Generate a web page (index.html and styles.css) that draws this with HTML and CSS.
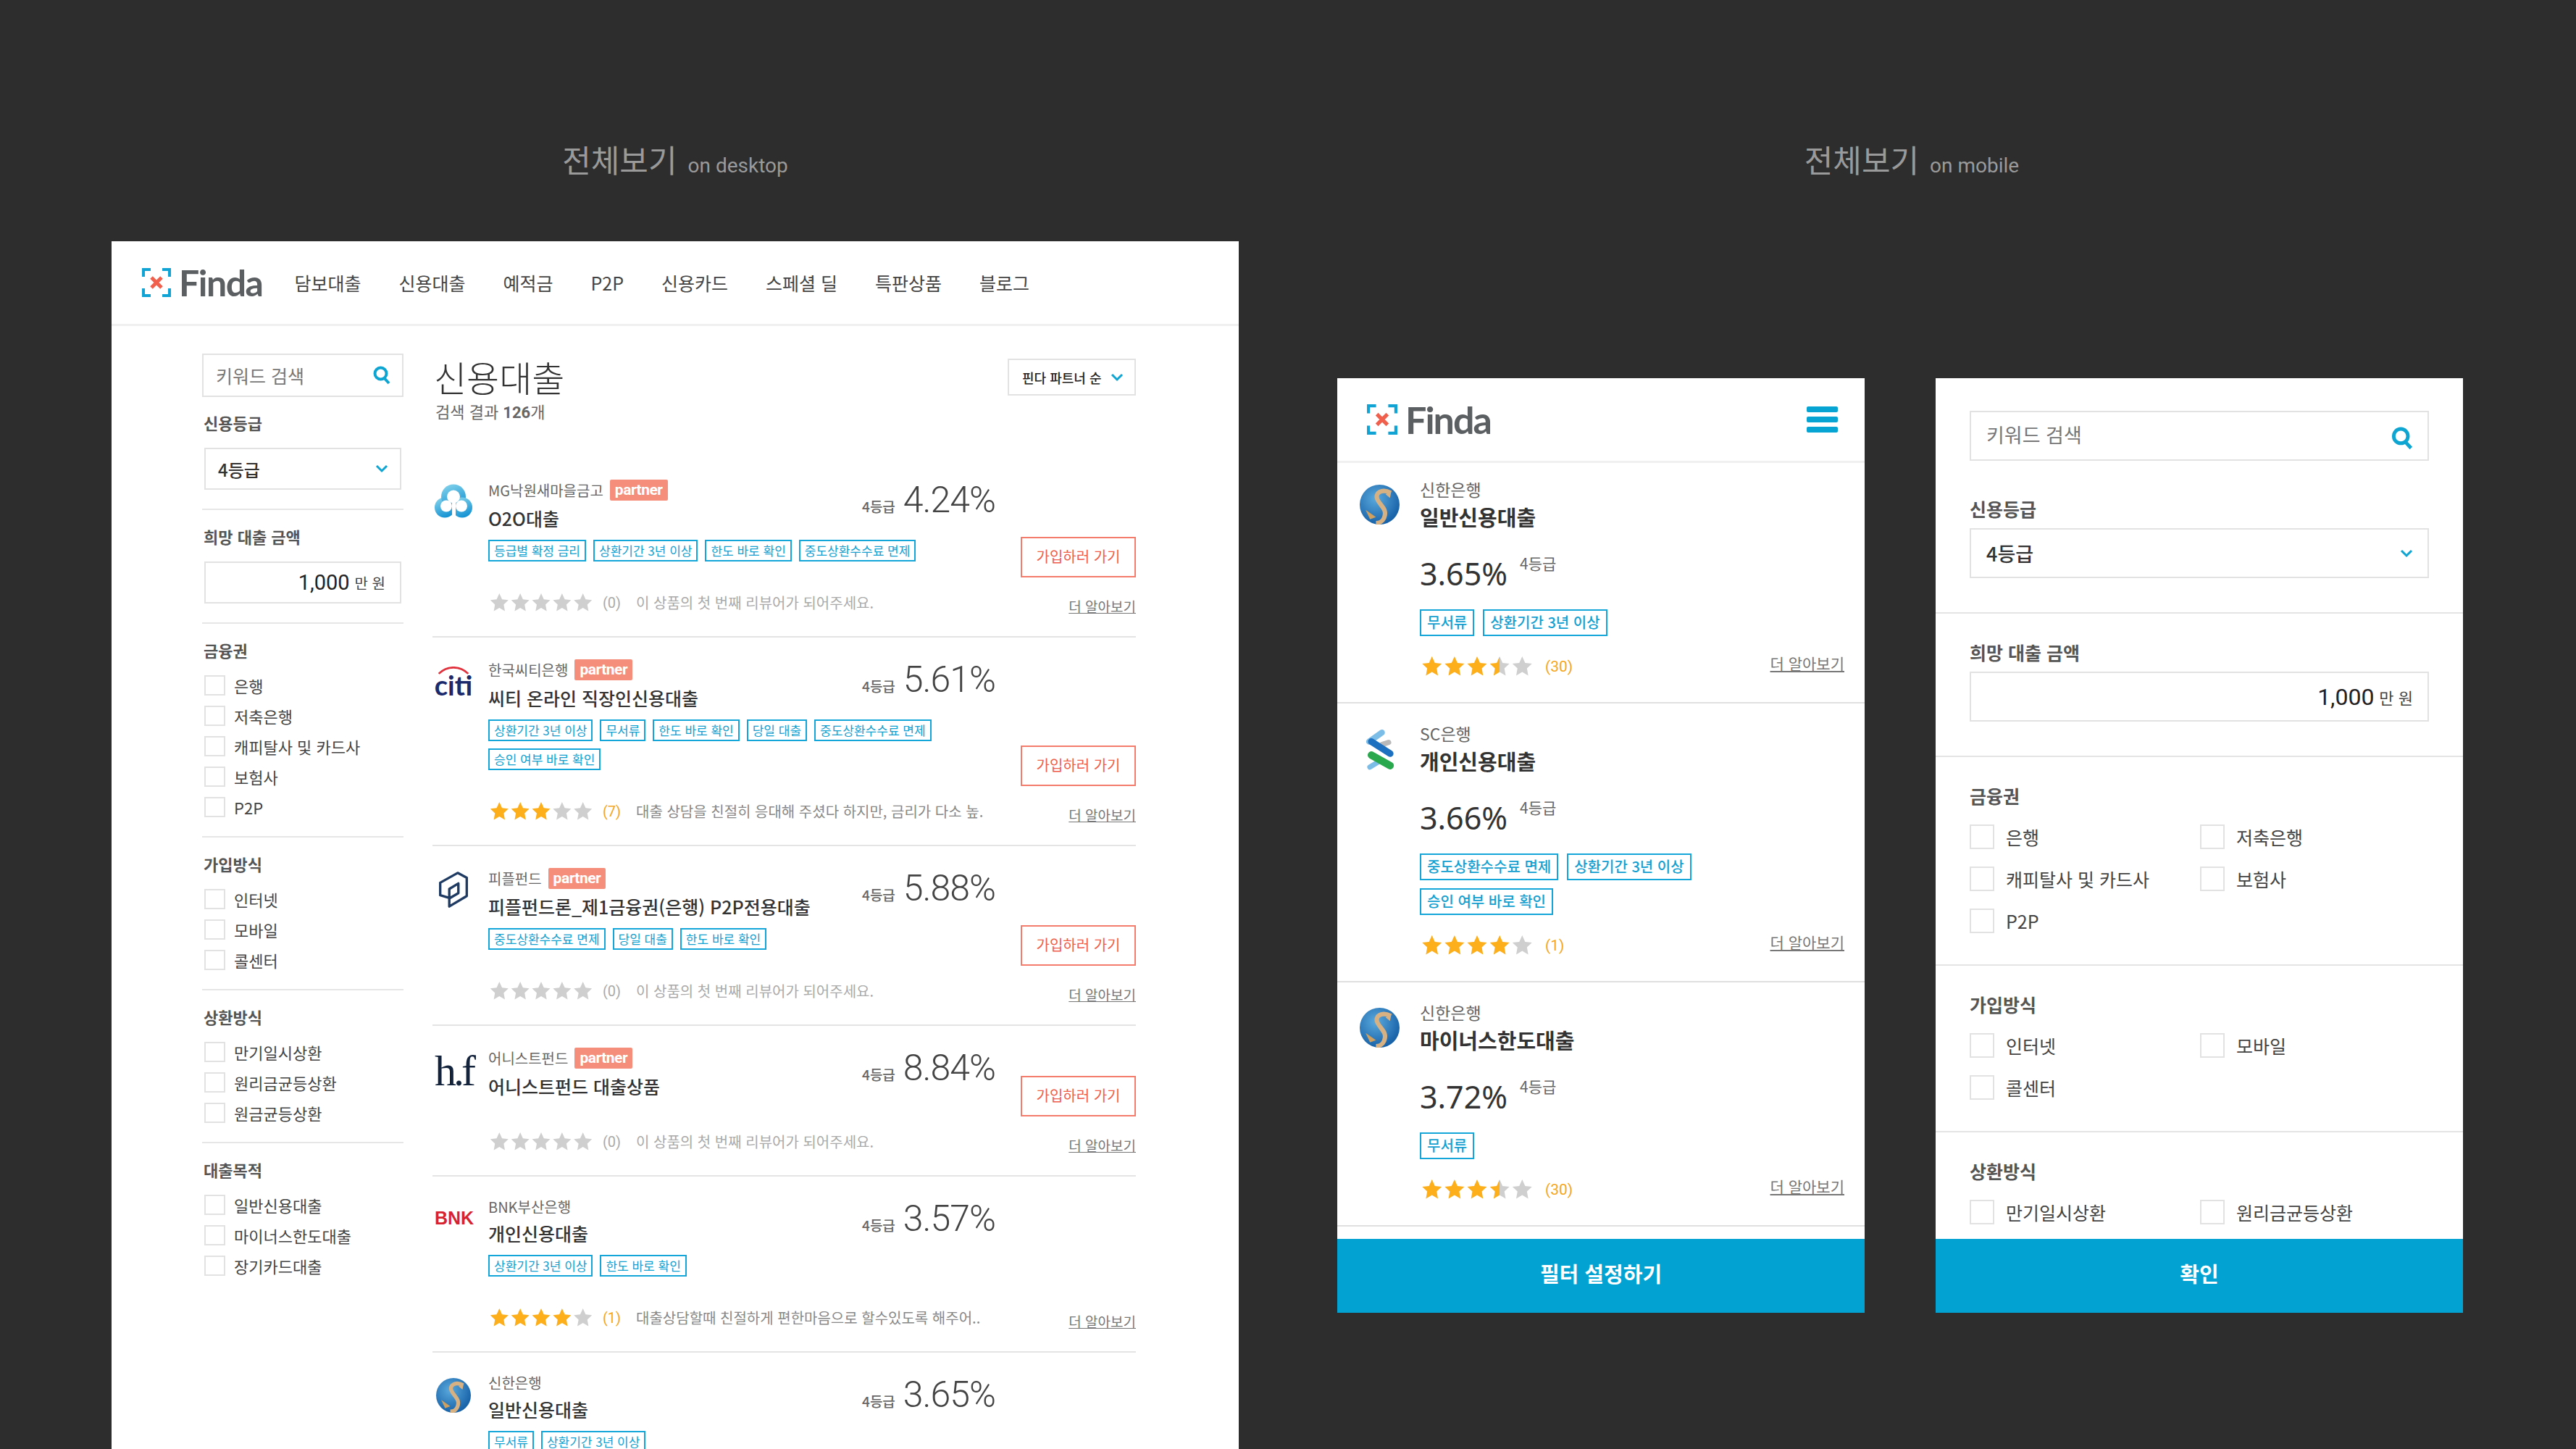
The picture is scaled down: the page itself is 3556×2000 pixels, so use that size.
FILE: index.html
```html
<!DOCTYPE html>
<html lang="ko">
<head>
    <meta charset="UTF-8">
    <title>Finda 전체보기</title>
    <link rel="stylesheet" href="styles.css">
</head>
<body>
    <!-- Shared icons -->
    <svg class="defs" width="0" height="0" aria-hidden="true">
        <defs>
            <linearGradient id="half-fill"><stop offset="50%" stop-color="#fdae1b"/><stop offset="50%" stop-color="#cfcfcf"/></linearGradient>
            <radialGradient id="globe" cx="40%" cy="35%" r="75%"><stop offset="0" stop-color="#5aa9dd"/><stop offset="1" stop-color="#0d57a0"/></radialGradient>
            <linearGradient id="cloud" x1="0.3" y1="0" x2="0.7" y2="1"><stop offset="0" stop-color="#7fd0ea"/><stop offset="1" stop-color="#0f8fd2"/></linearGradient>
            <polygon id="star" points="13,0 16.9,8.6 26,9.7 19.3,16 21,25.5 13,20.8 5,25.5 6.700,16 0,9.700 9.100,8.600"/>
        </defs>
        <symbol id="stars-0" viewBox="0 0 146 26"><g fill="#cfcfcf"><use href="#star"/><use href="#star" x="30"/><use href="#star" x="60"/><use href="#star" x="90"/><use href="#star" x="120"/></g></symbol>
        <symbol id="stars-3" viewBox="0 0 146 26"><g fill="#fdae1b"><use href="#star"/><use href="#star" x="30"/><use href="#star" x="60"/></g><g fill="#cfcfcf"><use href="#star" x="90"/><use href="#star" x="120"/></g></symbol>
        <symbol id="stars-4" viewBox="0 0 146 26"><g fill="#fdae1b"><use href="#star"/><use href="#star" x="30"/><use href="#star" x="60"/><use href="#star" x="90"/></g><use href="#star" x="120" fill="#cfcfcf"/></symbol>
        <symbol id="stars-3h" viewBox="0 0 146 26"><g fill="#fdae1b"><use href="#star"/><use href="#star" x="30"/><use href="#star" x="60"/></g><use href="#star" x="90" fill="url(#half-fill)"/><use href="#star" x="120" fill="#cfcfcf"/></symbol>
        <symbol id="finda-mark" viewBox="0 0 40 40">
            <path d="M2 12V2H12M28 2H38V12M2 28V38H12M28 38H38V28" fill="none" stroke="#11a3d4" stroke-width="4"/>
            <path d="M13 13L27 27M27 13L13 27" fill="none" stroke="#f0604d" stroke-width="5"/>
        </symbol>
        <symbol id="logo-shinhan" viewBox="0 0 54 54">
            <circle cx="27" cy="27" r="27" fill="url(#globe)"/>
            <path d="M42 11C30 5 20 11 24 20C28 29 38 33 33 45C31 50 26 52 22 52" fill="none" stroke="#d8b183" stroke-width="6"/>
            <path d="M35 13L43 8L41 18Z" fill="#d8b183"/>
            <path d="M8 34L22 44L14 47Z" fill="#cfa05f"/>
        </symbol>
        <symbol id="logo-mg" viewBox="9 14 52 47">
            <g fill="url(#cloud)"><circle cx="23" cy="46" r="14"/><circle cx="35" cy="31" r="17"/><circle cx="47" cy="46" r="14"/></g>
            <g fill="#fff"><circle cx="35" cy="31" r="9"/><circle cx="25" cy="44" r="8"/><circle cx="46" cy="44" r="8"/><rect x="33" y="34" width="5" height="28"/></g>
        </symbol>
        <symbol id="logo-people" viewBox="14 10 44 56">
            <path d="M17 28L42 14L55 21V47L30 62V37L43 29V43L31 50L17 46Z" fill="none" stroke="#1f3b63" stroke-width="3.500" stroke-linejoin="round"/>
        </symbol>
        <symbol id="logo-sc" viewBox="14 4 42 58">
            <path d="M38 9L21 21" fill="none" stroke="#7cbde8" stroke-width="8" stroke-linecap="round"/>
            <path d="M47 22L38 25" fill="none" stroke="#b9b9b9" stroke-width="7" stroke-linecap="round"/>
            <path d="M24 21L49 37" fill="none" stroke="#1d6fc0" stroke-width="9" stroke-linecap="round"/>
            <path d="M35 47L22 55" fill="none" stroke="#7cbde8" stroke-width="7" stroke-linecap="round"/>
            <path d="M24 39L49 53" fill="none" stroke="#2aa84e" stroke-width="10" stroke-linecap="round"/>
        </symbol>
        <symbol id="icon-search" viewBox="0 0 24 26">
            <circle cx="10.500" cy="10.500" r="8" fill="none" stroke="#0ea5d2" stroke-width="4"/>
            <path d="M15.500 17L22 24" fill="none" stroke="#0ea5d2" stroke-width="4"/>
        </symbol>
        <symbol id="icon-chevron" viewBox="0 0 18 12">
            <path d="M2 2L9 9L16 2" fill="none" stroke="#0ea5d2" stroke-width="3"/>
        </symbol>
    </svg>

    <div class="page">
        <!-- Desktop preview -->
        <section class="col-desktop">
            <h2 class="col-title">전체보기 <small>on desktop</small></h2>
            <div class="desktop">
                <header class="site-header">
                    <a class="brand">
                        <svg class="brand-mark"><use href="#finda-mark"/></svg>
                        <span class="brand-name">Finda</span>
                    </a>
                    <nav class="site-nav">
                        <a>담보대출</a><a>신용대출</a><a>예적금</a><a>P2P</a><a>신용카드</a><a>스페셜 딜</a><a>특판상품</a><a>블로그</a>
                    </nav>
                </header>
                <div class="desktop-body">
                    <aside class="sidebar">
                        <div class="field search-field"><span class="placeholder">키워드 검색</span><svg class="icon-search"><use href="#icon-search"/></svg></div>
                        <div class="side-group">
                            <div class="side-label">신용등급</div>
                            <div class="field inset"><span class="value-bold">4등급</span><svg class="icon-chevron"><use href="#icon-chevron"/></svg></div>
                        </div>
                        <div class="side-group">
                            <div class="side-label">희망 대출 금액</div>
                            <div class="field inset amount"><span class="amount-num">1,000</span><span class="amount-unit">만 원</span></div>
                        </div>
                        <div class="side-group">
                            <div class="side-label">금융권</div>
                            <label class="check"><i></i>은행</label>
                            <label class="check"><i></i>저축은행</label>
                            <label class="check"><i></i>캐피탈사 및 카드사</label>
                            <label class="check"><i></i>보험사</label>
                            <label class="check"><i></i>P2P</label>
                        </div>
                        <div class="side-group">
                            <div class="side-label">가입방식</div>
                            <label class="check"><i></i>인터넷</label>
                            <label class="check"><i></i>모바일</label>
                            <label class="check"><i></i>콜센터</label>
                        </div>
                        <div class="side-group">
                            <div class="side-label">상환방식</div>
                            <label class="check"><i></i>만기일시상환</label>
                            <label class="check"><i></i>원리금균등상환</label>
                            <label class="check"><i></i>원금균등상환</label>
                        </div>
                        <div class="side-group">
                            <div class="side-label">대출목적</div>
                            <label class="check"><i></i>일반신용대출</label>
                            <label class="check"><i></i>마이너스한도대출</label>
                            <label class="check"><i></i>장기카드대출</label>
                        </div>
                    </aside>

                    <main class="results">
                        <div class="results-head">
                            <div>
                                <h1 class="results-title">신용대출</h1>
                                <p class="results-count">검색 결과 <b>126</b>개</p>
                            </div>
                            <div class="sort">핀다 파트너 순<svg class="icon-chevron"><use href="#icon-chevron"/></svg></div>
                        </div>

                        <article class="loan">
                            <svg class="loan-logo logo-mg"><use href="#logo-mg"/></svg>
                            <div class="loan-main">
                                <div class="loan-top">
                                    <div class="loan-info">
                                        <div class="provider">MG낙원새마을금고<span class="partner">partner</span></div>
                                        <div class="product">O2O대출</div>
                                        <div class="tags"><span>등급별 확정 금리</span><span>상환기간 3년 이상</span><span>한도 바로 확인</span><span>중도상환수수료 면제</span></div>
                                    </div>
                                    <div class="loan-side">
                                        <div class="rate"><span>4등급</span><b>4.24%</b></div>
                                        <a class="join">가입하러 가기</a>
                                    </div>
                                </div>
                                <div class="review">
                                    <svg class="stars"><use href="#stars-0"/></svg><span class="count">(0)</span><span class="quote">이 상품의 첫 번째 리뷰어가 되어주세요.</span><a class="more">더 알아보기</a>
                                </div>
                            </div>
                        </article>

                        <article class="loan">
                            <div class="loan-logo logo-citi"><svg viewBox="0 0 52 12"><path d="M3 11C16 -2 36 -2 49 11" fill="none" stroke="#e0313c" stroke-width="3"/></svg><span>citi</span></div>
                            <div class="loan-main">
                                <div class="loan-top">
                                    <div class="loan-info">
                                        <div class="provider">한국씨티은행<span class="partner">partner</span></div>
                                        <div class="product">씨티 온라인 직장인신용대출</div>
                                        <div class="tags"><span>상환기간 3년 이상</span><span>무서류</span><span>한도 바로 확인</span><span>당일 대출</span><span>중도상환수수료 면제</span><span>승인 여부 바로 확인</span></div>
                                    </div>
                                    <div class="loan-side">
                                        <div class="rate"><span>4등급</span><b>5.61%</b></div>
                                        <a class="join">가입하러 가기</a>
                                    </div>
                                </div>
                                <div class="review">
                                    <svg class="stars"><use href="#stars-3"/></svg><span class="count on">(7)</span><span class="quote dark">대출 상담을 친절히 응대해 주셨다 하지만, 금리가 다소 높.</span><a class="more">더 알아보기</a>
                                </div>
                            </div>
                        </article>

                        <article class="loan">
                            <svg class="loan-logo logo-people"><use href="#logo-people"/></svg>
                            <div class="loan-main">
                                <div class="loan-top">
                                    <div class="loan-info">
                                        <div class="provider">피플펀드<span class="partner">partner</span></div>
                                        <div class="product">피플펀드론_제1금융권(은행) P2P전용대출</div>
                                        <div class="tags"><span>중도상환수수료 면제</span><span>당일 대출</span><span>한도 바로 확인</span></div>
                                    </div>
                                    <div class="loan-side">
                                        <div class="rate"><span>4등급</span><b>5.88%</b></div>
                                        <a class="join">가입하러 가기</a>
                                    </div>
                                </div>
                                <div class="review">
                                    <svg class="stars"><use href="#stars-0"/></svg><span class="count">(0)</span><span class="quote">이 상품의 첫 번째 리뷰어가 되어주세요.</span><a class="more">더 알아보기</a>
                                </div>
                            </div>
                        </article>

                        <article class="loan">
                            <div class="loan-logo logo-hf">h.f</div>
                            <div class="loan-main">
                                <div class="loan-top">
                                    <div class="loan-info">
                                        <div class="provider">어니스트펀드<span class="partner">partner</span></div>
                                        <div class="product">어니스트펀드 대출상품</div>
                                    </div>
                                    <div class="loan-side">
                                        <div class="rate"><span>4등급</span><b>8.84%</b></div>
                                        <a class="join">가입하러 가기</a>
                                    </div>
                                </div>
                                <div class="review">
                                    <svg class="stars"><use href="#stars-0"/></svg><span class="count">(0)</span><span class="quote">이 상품의 첫 번째 리뷰어가 되어주세요.</span><a class="more">더 알아보기</a>
                                </div>
                            </div>
                        </article>

                        <article class="loan">
                            <div class="loan-logo logo-bnk">BNK</div>
                            <div class="loan-main">
                                <div class="loan-top">
                                    <div class="loan-info">
                                        <div class="provider">BNK부산은행</div>
                                        <div class="product">개인신용대출</div>
                                        <div class="tags"><span>상환기간 3년 이상</span><span>한도 바로 확인</span></div>
                                    </div>
                                    <div class="loan-side">
                                        <div class="rate"><span>4등급</span><b>3.57%</b></div>
                                    </div>
                                </div>
                                <div class="review">
                                    <svg class="stars"><use href="#stars-4"/></svg><span class="count on">(1)</span><span class="quote dark">대출상담할때 친절하게 편한마음으로 할수있도록 해주어..</span><a class="more">더 알아보기</a>
                                </div>
                            </div>
                        </article>

                        <article class="loan">
                            <svg class="loan-logo logo-shinhan"><use href="#logo-shinhan"/></svg>
                            <div class="loan-main">
                                <div class="loan-top">
                                    <div class="loan-info">
                                        <div class="provider">신한은행</div>
                                        <div class="product">일반신용대출</div>
                                        <div class="tags"><span>무서류</span><span>상환기간 3년 이상</span></div>
                                    </div>
                                    <div class="loan-side">
                                        <div class="rate"><span>4등급</span><b>3.65%</b></div>
                                    </div>
                                </div>
                            </div>
                        </article>
                    </main>
                </div>
            </div>
        </section>

        <!-- Mobile previews -->
        <section class="col-mobile">
            <h2 class="col-title">전체보기 <small>on mobile</small></h2>
            <div class="phones">
                <div class="phone">
                    <header class="phone-header">
                        <a class="brand">
                            <svg class="brand-mark"><use href="#finda-mark"/></svg>
                            <span class="brand-name">Finda</span>
                        </a>
                        <div class="menu"><i></i><i></i><i></i></div>
                    </header>
                    <div class="phone-scroll">
                        <article class="card first">
                            <svg class="card-logo"><use href="#logo-shinhan"/></svg>
                            <div class="card-main">
                                <div class="card-provider">신한은행</div>
                                <div class="card-product">일반신용대출</div>
                                <div class="card-rate"><b>3.65%</b><span>4등급</span></div>
                                <div class="tags large"><span>무서류</span><span>상환기간 3년 이상</span></div>
                                <div class="card-review"><svg class="stars"><use href="#stars-3h"/></svg><span class="count on">(30)</span><a class="more">더 알아보기</a></div>
                            </div>
                        </article>
                        <article class="card">
                            <svg class="card-logo logo-sc"><use href="#logo-sc"/></svg>
                            <div class="card-main">
                                <div class="card-provider">SC은행</div>
                                <div class="card-product">개인신용대출</div>
                                <div class="card-rate"><b>3.66%</b><span>4등급</span></div>
                                <div class="tags large"><span>중도상환수수료 면제</span><span>상환기간 3년 이상</span><span>승인 여부 바로 확인</span></div>
                                <div class="card-review"><svg class="stars"><use href="#stars-4"/></svg><span class="count on">(1)</span><a class="more">더 알아보기</a></div>
                            </div>
                        </article>
                        <article class="card">
                            <svg class="card-logo"><use href="#logo-shinhan"/></svg>
                            <div class="card-main">
                                <div class="card-provider">신한은행</div>
                                <div class="card-product">마이너스한도대출</div>
                                <div class="card-rate"><b>3.72%</b><span>4등급</span></div>
                                <div class="tags large"><span>무서류</span></div>
                                <div class="card-review"><svg class="stars"><use href="#stars-3h"/></svg><span class="count on">(30)</span><a class="more">더 알아보기</a></div>
                            </div>
                        </article>
                    </div>
                    <a class="phone-cta">필터 설정하기</a>
                </div>

                <div class="phone">
                    <div class="phone-scroll">
                        <div class="m-group top">
                            <div class="field m-field"><span class="placeholder">키워드 검색</span><svg class="icon-search"><use href="#icon-search"/></svg></div>
                            <div class="m-label spaced">신용등급</div>
                            <div class="field m-field"><span class="value-bold">4등급</span><svg class="icon-chevron"><use href="#icon-chevron"/></svg></div>
                        </div>
                        <div class="m-group">
                            <div class="m-label">희망 대출 금액</div>
                            <div class="field m-field amount"><span class="amount-num">1,000</span><span class="amount-unit">만 원</span></div>
                        </div>
                        <div class="m-group">
                            <div class="m-label">금융권</div>
                            <div class="m-checks">
                                <label class="check"><i></i>은행</label>
                                <label class="check"><i></i>저축은행</label>
                                <label class="check"><i></i>캐피탈사 및 카드사</label>
                                <label class="check"><i></i>보험사</label>
                                <label class="check"><i></i>P2P</label>
                            </div>
                        </div>
                        <div class="m-group">
                            <div class="m-label">가입방식</div>
                            <div class="m-checks">
                                <label class="check"><i></i>인터넷</label>
                                <label class="check"><i></i>모바일</label>
                                <label class="check"><i></i>콜센터</label>
                            </div>
                        </div>
                        <div class="m-group">
                            <div class="m-label">상환방식</div>
                            <div class="m-checks">
                                <label class="check"><i></i>만기일시상환</label>
                                <label class="check"><i></i>원리금균등상환</label>
                            </div>
                        </div>
                    </div>
                    <a class="phone-cta">확인</a>
                </div>
            </div>
        </section>
    </div>
</body>
</html>
```

FILE: styles.css
```css
* {
    box-sizing: border-box;
}

body {
    margin: 0;
    height: 2000px;
    overflow: hidden;
    background-color: #2d2d2d;
    color: #333;
    font-family: "Noto Sans CJK KR", "Noto Sans", sans-serif;
}

.defs {
    position: absolute;
}

.page {
    display: flex;
    padding-top: 189px;
}

.col-title {
    margin: 0;
    height: 60px;
    line-height: 60px;
    text-align: center;
    color: #9a9a9a;
    font-size: 43px;
    font-weight: 400;
}

.col-title small {
    margin-left: 3px;
    font-family: Roboto, sans-serif;
    font-size: 28px;
}

/* Desktop column */
.col-desktop {
    width: 1556px;
    margin-left: 154px;
}

.desktop {
    height: 1667px;
    margin-top: 84px;
    background-color: #fff;
    overflow: hidden;
}

.site-header {
    display: flex;
    align-items: center;
    height: 117px;
    padding-left: 42px;
    border-bottom: 3px solid #f0f0f0;
}

.brand {
    display: flex;
    align-items: center;
}

.brand-mark {
    width: 40px;
    height: 40px;
}

.brand-name {
    margin-left: 11px;
    color: #5c5f62;
    font-family: Lato, sans-serif;
    font-size: 50px;
    font-weight: 700;
    line-height: 40px;
    letter-spacing: -1.500px;
}

.site-nav {
    display: flex;
    gap: 52px;
    margin-left: 44px;
    color: #444;
    font-size: 25px;
}

.desktop-body {
    display: flex;
    gap: 40px;
    padding: 38px 142px 0 125px;
}

/* Sidebar */
.sidebar {
    flex: none;
    width: 278px;
}

.field {
    display: flex;
    align-items: center;
    justify-content: space-between;
    height: 58px;
    padding: 0 16px 0 17px;
    border: 2px solid #e2e2e2;
}

.search-field {
    height: 60px;
    margin-bottom: 24px;
}

.inset {
    margin: 0 3px;
}

.placeholder {
    color: #777;
    font-size: 25px;
}

.icon-search {
    width: 24px;
    height: 26px;
}

.icon-chevron {
    flex: none;
    width: 18px;
    height: 12px;
}

.value-bold {
    color: #333;
    font-size: 24px;
    font-weight: 500;
}

.amount {
    justify-content: flex-end;
    gap: 7px;
    padding-right: 20px;
}

.amount-num {
    color: #222;
    font-family: Roboto, sans-serif;
    font-size: 29px;
}

.amount-unit {
    color: #444;
    font-size: 20px;
}

.side-group {
    padding-bottom: 26px;
}

.side-group + .side-group {
    padding-top: 25px;
    border-top: 2px solid #e6e6e6;
}

.side-label {
    height: 22px;
    margin-bottom: 24px;
    padding-left: 2px;
    color: #555;
    font-size: 22px;
    font-weight: 700;
    line-height: 22px;
}

.check {
    display: flex;
    align-items: center;
    height: 28px;
    margin-bottom: 14px;
    margin-left: 3px;
    color: #444;
    font-size: 22px;
}

.check:last-child {
    margin-bottom: 0;
}

.check i {
    flex: none;
    width: 29px;
    height: 28px;
    margin-right: 12px;
    border: 2px solid #e2e2e2;
}

/* Results */
.results {
    flex: 1;
    min-width: 0;
}

.results-head {
    display: flex;
    justify-content: space-between;
    align-items: flex-start;
    height: 144px;
    padding: 0 0 0 2px;
}

.results-title {
    margin: 0;
    color: #333;
    font-size: 49px;
    font-weight: 300;
    line-height: 64px;
}

.results-count {
    margin: 1px 0 0 2px;
    color: #666;
    font-size: 22px;
    line-height: 28px;
}

.results-count b {
    font-family: Roboto, sans-serif;
}

.sort {
    display: flex;
    align-items: center;
    justify-content: space-between;
    width: 177px;
    height: 51px;
    margin-top: 7px;
    padding: 0 15px 0 18px;
    border: 2px solid #e2e2e2;
    color: #222;
    font-size: 18px;
    font-weight: 500;
}

.loan {
    display: flex;
    padding: 30px 0 34px;
    border-bottom: 2px solid #e4e4e4;
}

.loan:last-child {
    border-bottom: none;
}

.loan-logo {
    flex: none;
    width: 52px;
    height: 48px;
    margin: 6px 22px 0 3px;
}

.logo-citi {
    display: flex;
    flex-direction: column;
    align-items: center;
    margin-top: 10px;
    color: #1a2a6c;
    font-family: Lato, sans-serif;
    font-size: 38px;
    font-weight: 700;
    line-height: 26px;
}

.logo-citi svg {
    width: 46px;
    height: 11px;
    margin-bottom: 1px;
}

.logo-hf {
    color: #14233c;
    font-family: "Liberation Serif", serif;
    font-size: 60px;
    line-height: 52px;
    letter-spacing: -4px;
}

.logo-bnk {
    margin-top: 14px;
    color: #d7232f;
    font-family: "Liberation Sans", sans-serif;
    font-size: 25px;
    font-weight: 700;
    line-height: 26px;
}

.logo-people {
    height: 54px;
    margin-top: 3px;
}

.logo-shinhan {
    margin-top: 5px;
}

.loan-main {
    flex: 1;
    min-width: 0;
}

.loan-top {
    display: flex;
    justify-content: space-between;
}

.loan-info {
    flex: none;
    width: 640px;
    padding-bottom: 22px;
}

.provider {
    display: flex;
    align-items: center;
    min-height: 24px;
    color: #666;
    font-size: 20px;
    line-height: 24px;
}

.partner {
    display: block;
    height: 29px;
    margin-left: 9px;
    padding: 0 7px;
    border-radius: 2px;
    background-color: #f58f7c;
    color: #fff;
    font-family: Roboto, sans-serif;
    font-size: 21px;
    font-weight: 700;
    line-height: 28px;
    letter-spacing: -0.500px;
}

.product {
    margin-top: 6px;
    color: #333;
    font-size: 25px;
    font-weight: 500;
    line-height: 36px;
}

.tags {
    display: flex;
    flex-wrap: wrap;
    gap: 10px;
    margin-top: 12px;
}

.tags span {
    height: 30px;
    padding: 0 6px;
    border: 2px solid #14a6d8;
    color: #14a0d0;
    font-size: 17px;
    line-height: 25px;
    white-space: nowrap;
}

.loan-side {
    display: flex;
    flex: none;
    flex-direction: column;
    justify-content: space-between;
    width: 254px;
}

.rate {
    display: flex;
    justify-content: flex-end;
    align-items: baseline;
    gap: 11px;
    height: 39px;
    padding-right: 194px;
    line-height: 56px;
    white-space: nowrap;
}

.rate span {
    color: #666;
    font-size: 19px;
    font-weight: 500;
}

.rate b {
    color: #444;
    font-family: Roboto, sans-serif;
    font-size: 50px;
    font-weight: 300;
    letter-spacing: -1px;
}

.join {
    align-self: flex-end;
    width: 159px;
    height: 56px;
    border: 2px solid #f47c6c;
    color: #ef5d4a;
    font-size: 20px;
    line-height: 50px;
    text-align: center;
}

.review {
    display: flex;
    align-items: center;
    height: 25px;
    margin-top: 22px;
}

.stars {
    flex: none;
    width: 146px;
    height: 25px;
}

.count {
    margin-left: 12px;
    color: #aaa;
    font-family: Roboto, sans-serif;
    font-size: 20px;
}

.count.on {
    color: #f5a623;
}

.quote {
    margin-left: 21px;
    color: #aaa;
    font-size: 20px;
}

.quote.dark {
    color: #888;
}

.more {
    margin-left: auto;
    color: #777;
    font-size: 19px;
    text-decoration: underline;
    white-space: nowrap;
}

.review .more {
    margin-top: 10px;
}

/* Mobile column */
.col-mobile {
    flex: 1;
    padding-left: 12px;
}

.phones {
    display: flex;
    gap: 98px;
    margin-top: 273px;
    margin-left: 124px;
}

.phone {
    display: flex;
    flex-direction: column;
    width: 728px;
    height: 1290px;
    background-color: #fff;
    overflow: hidden;
}

.phone-header {
    display: flex;
    flex: none;
    justify-content: space-between;
    align-items: center;
    height: 117px;
    padding: 0 37px 0 41px;
    border-bottom: 3px solid #f0f0f0;
}

.phone-header .brand-mark {
    width: 42px;
    height: 42px;
}

.phone-header .brand-name {
    font-size: 52px;
    letter-spacing: -2px;
}

.menu {
    display: flex;
    flex-direction: column;
    gap: 6px;
    width: 43px;
}

.menu i {
    height: 8px;
    border-radius: 2px;
    background-color: #06a4d3;
}

.phone-scroll {
    flex: 1;
    min-height: 0;
    overflow: hidden;
}

.phone-cta {
    flex: none;
    height: 102px;
    background-color: #02a3d3;
    color: #fff;
    font-size: 29px;
    font-weight: 700;
    line-height: 94px;
    text-align: center;
}

.card {
    display: flex;
    padding: 26px 28px 36px 31px;
    border-bottom: 2px solid #e0e0e0;
}

.card.first {
    padding-top: 21px;
}

.card-logo {
    flex: none;
    width: 55px;
    height: 55px;
    margin: 9px 28px 0 0;
}

.logo-sc {
    height: 60px;
}

.card-main {
    flex: 1;
    min-width: 0;
}

.card-provider {
    color: #666;
    font-size: 23px;
    line-height: 30px;
}

.card-product {
    margin-top: 5px;
    color: #333;
    font-size: 29px;
    font-weight: 700;
    line-height: 36px;
}

.card-rate {
    display: flex;
    align-items: flex-start;
    gap: 17px;
    margin-top: 31px;
    height: 60px;
}

.card-rate b {
    color: #333;
    font-family: "Noto Sans", sans-serif;
    font-size: 43px;
    font-weight: 400;
    line-height: 60px;
}

.card-rate span {
    color: #666;
    font-size: 21px;
    line-height: 30px;
}

.tags.large {
    gap: 11px 12px;
    max-width: 540px;
    margin-top: 19px;
}

.tags.large span {
    height: 37px;
    padding: 0 8px;
    font-size: 20px;
    font-weight: 500;
    line-height: 31px;
}

.card-review {
    display: flex;
    align-items: center;
    height: 27px;
    margin-top: 28px;
}

.card-review .stars {
    width: 158px;
    height: 27px;
}

.card-review .count {
    margin-left: 15px;
    font-size: 21px;
}

.card-review .more {
    margin-top: -10px;
    font-size: 21px;
}

/* Mobile filters */
.m-group {
    padding: 38px 47px 43px;
    border-bottom: 2px solid #e4e4e4;
}

.m-group.top {
    padding-top: 45px;
    padding-bottom: 47px;
}

.m-group:nth-child(2) {
    padding-bottom: 47px;
}

.m-group:last-child {
    border-bottom: none;
}

.m-label {
    height: 30px;
    margin-bottom: 12px;
    color: #555;
    font-size: 25px;
    font-weight: 700;
    line-height: 30px;
}

.m-label.spaced {
    margin-top: 51px;
}

.m-group:nth-child(n+3) .m-label {
    margin-bottom: 25px;
}

.m-field {
    height: 69px;
    padding: 0 20px 0 21px;
}

.m-field .placeholder {
    margin-bottom: 5px;
    font-size: 27px;
}

.m-field .value-bold {
    font-size: 27px;
}

.m-field .icon-search {
    width: 30px;
    height: 32px;
    margin-top: 6px;
}

.m-field .amount-num {
    font-size: 32px;
}

.m-field .amount-unit {
    font-size: 22px;
}

.m-checks {
    display: grid;
    grid-template-columns: 318px 1fr;
    row-gap: 24px;
}

.m-checks .check {
    height: 34px;
    margin: 0;
    font-size: 25px;
}

.m-checks .check i {
    width: 34px;
    height: 34px;
    margin-right: 16px;
}
```
